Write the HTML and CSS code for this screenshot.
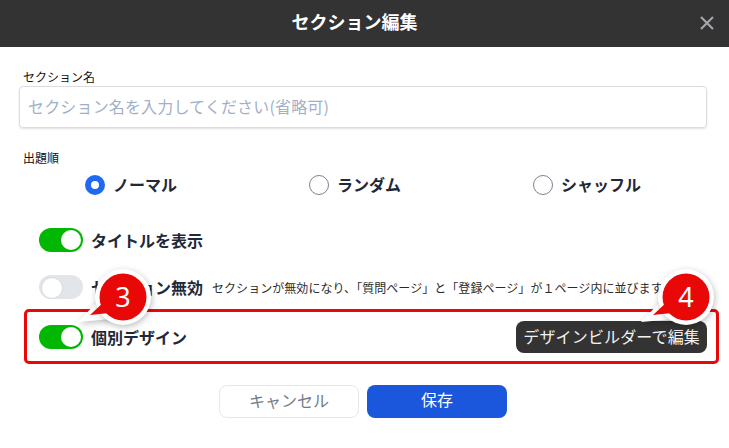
FILE: index.html
```html
<!DOCTYPE html>
<html lang="ja">
<head>
    <meta charset="UTF-8">
    <title>セクション編集</title>
    <link rel="stylesheet" href="styles.css">
</head>
<body>
    <div class="modal">
        <div class="modal-header">
            <h1>セクション編集</h1>
            <svg class="close-icon" width="14" height="14" viewBox="0 0 14 14">
                <path d="M1 1 L13 13 M13 1 L1 13" stroke="#a3a6ab" stroke-width="2.2" fill="none"/>
            </svg>
        </div>

        <div class="modal-body">
            <label class="field-label">セクション名</label>
            <div class="text-input">セクション名を入力してください(省略可)</div>

            <label class="field-label order-label">出題順</label>
            <div class="radio-row">
                <div class="radio-item">
                    <span class="radio radio-on"></span>
                    <span class="radio-text">ノーマル</span>
                </div>
                <div class="radio-item">
                    <span class="radio"></span>
                    <span class="radio-text">ランダム</span>
                </div>
                <div class="radio-item">
                    <span class="radio"></span>
                    <span class="radio-text">シャッフル</span>
                </div>
            </div>

            <div class="toggle-row title-row">
                <span class="toggle toggle-on"></span>
                <span class="toggle-text">タイトルを表示</span>
            </div>
            <div class="toggle-row disable-row">
                <span class="toggle"></span>
                <span class="toggle-text">セクション無効</span>
                <span class="toggle-note">セクションが無効になり、「質問ページ」と「登録ページ」が１ページ内に並びます。</span>
            </div>
            <div class="toggle-row design-row">
                <span class="toggle toggle-on"></span>
                <span class="toggle-text">個別デザイン</span>
                <span class="builder-btn">デザインビルダーで編集</span>
            </div>

            <div class="footer-buttons">
                <span class="btn btn-cancel">キャンセル</span>
                <span class="btn btn-save">保存</span>
            </div>
        </div>
    </div>

    <div class="callout callout-3">
        <svg width="66" height="66" viewBox="0 0 66 66">
            <path class="callout-halo" d="M-1 52 L20 30 L32 49 Z"/>
            <circle class="callout-halo" cx="44" cy="27" r="28"/>
            <path class="callout-fill" d="M11 45 L26 31 L30 43 Z"/>
            <circle class="callout-fill" cx="44" cy="27" r="23.5"/>
        </svg>
        <span class="callout-num">3</span>
    </div>
    <div class="callout callout-4">
        <svg width="66" height="66" viewBox="0 0 66 66">
            <path class="callout-halo" d="M-1 52 L20 30 L32 49 Z"/>
            <circle class="callout-halo" cx="44" cy="27" r="28"/>
            <path class="callout-fill" d="M11 45 L26 31 L30 43 Z"/>
            <circle class="callout-fill" cx="44" cy="27" r="23.5"/>
        </svg>
        <span class="callout-num">4</span>
    </div>
</body>
</html>
```

FILE: styles.css
```css
* {
    box-sizing: border-box;
}

body {
    margin: 0;
    width: 729px;
    height: 448px;
    overflow: hidden;
    background-color: #ffffff;
    position: relative;
    font-family: "Noto Sans CJK JP", "Noto Sans", sans-serif;
    color: #1f2937;
}

.modal-header {
    height: 47px;
    padding-right: 20px;
    background-color: #333333;
    display: flex;
    justify-content: center;
    align-items: center;
    position: relative;
}

.modal-header h1 {
    margin: 0 0 5px;
    font-size: 18px;
    font-weight: 700;
    color: #ffffff;
    line-height: 1;
}

.close-icon {
    position: absolute;
    right: 15px;
    top: 16px;
}

.modal-body {
    padding: 21px 22px 0 19px;
}

.field-label {
    display: block;
    font-size: 12px;
    line-height: 18px;
    color: #111111;
    padding-left: 4px;
}

.text-input {
    height: 42px;
    padding-left: 8px;
    border: 1px solid #dcdcdc;
    border-radius: 4px;
    box-shadow: 0 1px 2px rgba(0, 0, 0, 0.12);
    font-size: 16px;
    letter-spacing: 0.16px;
    line-height: 38px;
    color: #9fb0c8;
}

.order-label {
    margin-top: 21px;
}

.radio-row {
    display: flex;
    margin-top: 6px;
    height: 24px;
    padding-left: 66px;
}

.radio-item {
    display: flex;
    align-items: center;
    gap: 8px;
}

.radio-item:nth-child(1) {
    width: 224px;
}

.radio-item:nth-child(2) {
    width: 224px;
}

.radio {
    width: 20px;
    height: 20px;
    border: 1px solid #7d8390;
    border-radius: 50%;
    background-color: #ffffff;
}

.radio-on {
    border: 6px solid #1f6af0;
}

.radio-text {
    padding-bottom: 2px;
    font-size: 16px;
    font-weight: 700;
    line-height: 24px;
}

.toggle-row {
    display: flex;
    align-items: center;
}

.title-row {
    margin-top: 30px;
    height: 26px;
    padding-left: 20px;
}

.disable-row {
    margin-top: 21px;
    height: 26px;
    padding-left: 20px;
}

.design-row {
    margin-top: 9px;
    margin-left: 5px;
    margin-right: -12px;
    height: 55px;
    padding: 0 9px 0 12px;
    border: 3px solid #e80808;
    border-radius: 5px;
}

.toggle {
    width: 44px;
    height: 24px;
    flex-shrink: 0;
    border-radius: 12px;
    background-color: #e2e5ea;
    position: relative;
    margin-right: 8px;
}

.toggle::after {
    content: "";
    position: absolute;
    left: 2px;
    top: 2px;
    width: 20px;
    height: 20px;
    border-radius: 50%;
    background-color: #ffffff;
    border: 1px solid #d5d8dd;
}

.toggle-on {
    background-color: #02b702;
}

.toggle-on::after {
    left: 22px;
    border: none;
}

.toggle-text {
    font-size: 16px;
    font-weight: 700;
    line-height: 24px;
}

.toggle-note {
    font-size: 12px;
    margin-left: 9px;
    letter-spacing: 0.05px;
    color: #2b2b2b;
    white-space: nowrap;
}

.builder-btn {
    margin-left: auto;
    height: 32px;
    padding: 0 7px;
    border-radius: 8px;
    background-color: #333333;
    color: #f2f2f2;
    font-size: 16px;
    letter-spacing: 0.15px;
    line-height: 30px;
    white-space: nowrap;
}

.footer-buttons {
    display: flex;
    justify-content: center;
    gap: 8px;
    margin-top: 21px;
}

.btn {
    width: 140px;
    height: 33px;
    border-radius: 8px;
    text-align: center;
    font-size: 16px;
    line-height: 29px;
}

.btn-cancel {
    border: 1px solid #e5e7eb;
    color: #737b88;
}

.btn-save {
    background-color: #1b57dc;
    color: #ffffff;
}

.callout {
    position: absolute;
    top: 270px;
    width: 66px;
    height: 66px;
}

.callout-3 {
    left: 79px;
}

.callout-4 {
    left: 642px;
}

.callout svg {
    display: block;
    overflow: visible;
}

.callout-halo {
    fill: #ffffff;
    filter: drop-shadow(1px 2px 3px rgba(0, 0, 0, 0.25));
}

.callout-fill {
    fill: #e80808;
}

.callout-num {
    position: absolute;
    left: 22px;
    top: 5px;
    width: 44px;
    text-align: center;
    color: #ffffff;
    font-family: "Noto Sans", sans-serif;
    font-size: 27px;
    line-height: 44px;
}
```
